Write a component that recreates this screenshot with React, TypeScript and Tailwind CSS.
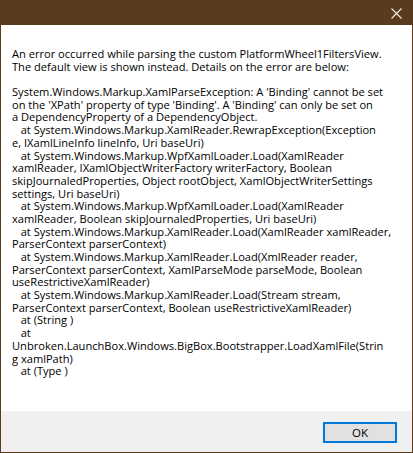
const lines = [
  "An error occurred while parsing the custom PlatformWheel1FiltersView.",
  "The default view is shown instead. Details on the error are below:",
  "",
  "System.Windows.Markup.XamlParseException: A 'Binding' cannot be set",
  "on the 'XPath' property of type 'Binding'. A 'Binding' can only be set on",
  "a DependencyProperty of a DependencyObject.",
  "   at System.Windows.Markup.XamlReader.RewrapException(Exception",
  "e, IXamlLineInfo lineInfo, Uri baseUri)",
  "   at System.Windows.Markup.WpfXamlLoader.Load(XamlReader",
  "xamlReader, IXamlObjectWriterFactory writerFactory, Boolean",
  "skipJournaledProperties, Object rootObject, XamlObjectWriterSettings",
  "settings, Uri baseUri)",
  "   at System.Windows.Markup.WpfXamlLoader.Load(XamlReader",
  "xamlReader, Boolean skipJournaledProperties, Uri baseUri)",
  "   at System.Windows.Markup.XamlReader.Load(XamlReader xamlReader,",
  "ParserContext parserContext)",
  "   at System.Windows.Markup.XamlReader.Load(XmlReader reader,",
  "ParserContext parserContext, XamlParseMode parseMode, Boolean",
  "useRestrictiveXamlReader)",
  "   at System.Windows.Markup.XamlReader.Load(Stream stream,",
  "ParserContext parserContext, Boolean useRestrictiveXamlReader)",
  "   at (String )",
  "   at",
  "Unbroken.LaunchBox.Windows.BigBox.Bootstrapper.LoadXamlFile(Strin",
  "g xamlPath)",
  "   at (Type )",
]

export default function App() {
  return (
    <div className="w-[413px] h-[453px] bg-white font-['Open_Sans','Noto_Sans',sans-serif]">
      <div className="flex flex-col h-full border border-[#5b3b1d]">
        {/* title bar */}
        <div className="h-[24px] bg-[#5b3b1d] flex items-center justify-end pr-[10px] shrink-0">
          <svg width="11" height="11" viewBox="0 0 11 11">
            <path d="M0.5 0.5 L10.5 10.5 M10.5 0.5 L0.5 10.5" stroke="#f2ece6" strokeWidth="1.1" />
          </svg>
        </div>

        <div className="flex-1 bg-white pl-[11px] pt-[23px] text-[11.1px] leading-[12.7px] text-black">
          {lines.map((line, i) => (
            <div key={i} className="whitespace-pre h-[12.7px]">{line || " "}</div>
          ))}
        </div>

        <div className="h-[41px] bg-[#f0f0f0] flex items-start justify-end pr-[15px] pt-[11px] shrink-0">
          <button className="w-[74px] h-[21px] border-2 border-[#0078d7] bg-[#e1e1e1] text-[11.5px] text-black flex items-center justify-center">
            OK
          </button>
        </div>
      </div>
    </div>
  )
}
